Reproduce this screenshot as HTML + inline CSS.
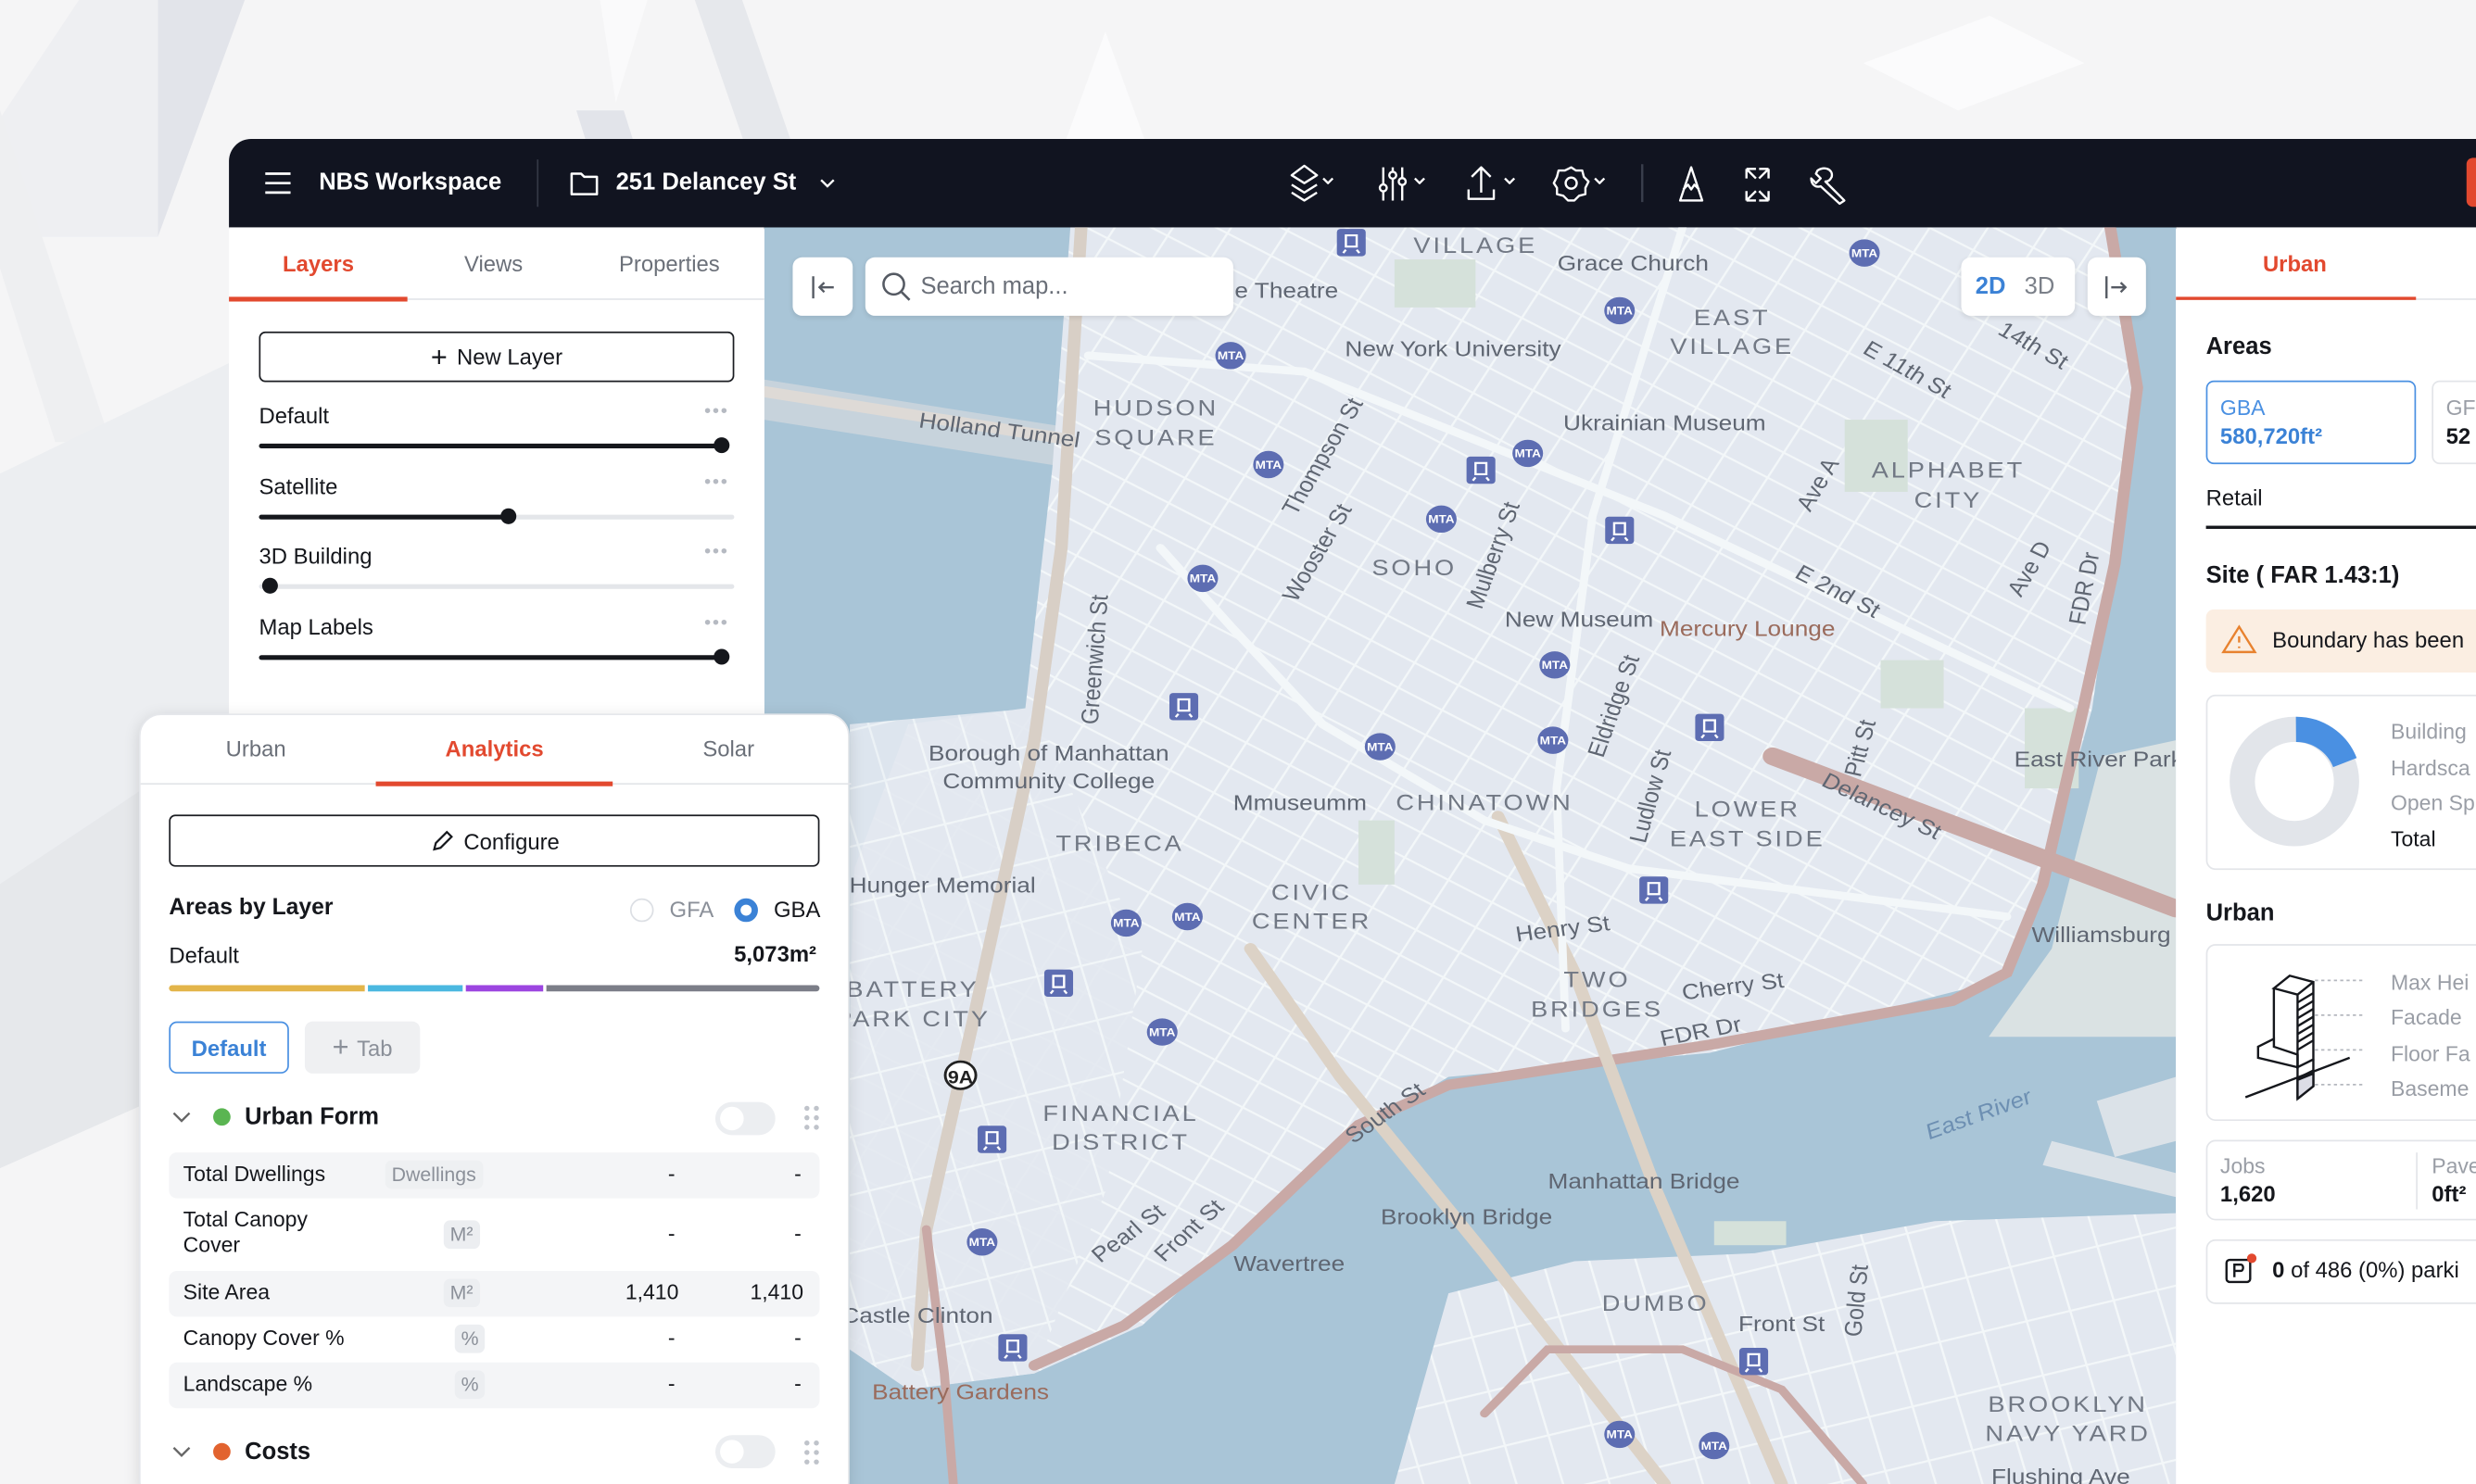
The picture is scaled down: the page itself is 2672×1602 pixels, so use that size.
<!DOCTYPE html>
<html><head><meta charset="utf-8">
<style>
*{box-sizing:border-box;margin:0;padding:0}
html,body{width:2672px;height:1602px;overflow:hidden;background:#f5f5f6}
body{font-family:"Liberation Sans",sans-serif;color:#15171c}
#root{position:absolute;left:0;top:0;width:1568px;height:940px;transform:scale(1.70408,1.7043);transform-origin:0 0;overflow:hidden;background:#f5f5f6}
.abs{position:absolute}
.t{position:absolute;white-space:nowrap}
.hdr{left:145px;top:88px;width:1440px;height:57px;background:#111420;border-radius:14px 0 0 0}
.wt{color:#fff;font-size:15px;font-weight:bold}
.lp{left:145px;top:144px;width:339px;height:800px;background:#fff}
.tab{font-size:14px;color:#6b7079}
.red{color:#e2492f}
.btn{position:absolute;border:1.5px solid #1b1d22;border-radius:4px;display:flex;align-items:center;justify-content:center;font-size:14px;gap:6px;background:#fff}
.lbl{font-size:14px;color:#15171c}
.dots{position:absolute;color:#b6bac2;font-size:12px;letter-spacing:1px}
.track{position:absolute;height:3px;background:#e4e6ea;border-radius:2px}
.fill{position:absolute;height:3px;background:#15171c;border-radius:2px}
.knob{position:absolute;width:10px;height:10px;border-radius:50%;background:#15171c}
.card{position:absolute;left:88px;top:452px;width:450px;height:500px;background:#fff;border-radius:14px;box-shadow:0 2px 10px rgba(0,0,0,.12);border:1px solid #e5e7eb}
.row{position:absolute;left:18px;width:412px;border-radius:5px;font-size:13.5px}
.sh{background:#f4f5f7}
.chip{position:absolute;background:#eceef1;color:#8b9099;font-size:12.5px;border-radius:4px;padding:2px 4px}
.rp{left:1378px;top:144px;width:200px;height:800px;background:#fff}
.rc{position:absolute;left:1397px;width:190px;border:1px solid #e3e5e9;border-radius:6px;background:#fff}
.gl{font-size:13.5px;color:#9a9ea6}
</style></head><body><div id="root">

<svg class="abs" style="left:0;top:0" width="1568" height="940">
<polygon points="50,0 100,0 100,150 0,150 0,75" fill="#eeeff2"/>
<polygon points="100,0 155,0 100,150" fill="#e2e4ea"/>
<polygon points="0,70 70,280 35,280 0,170" fill="#eeeff1"/>
<polygon points="365,70 425,260 455,260 395,70" fill="#e2e4ea"/>
<polygon points="380,0 410,0 390,65" fill="#fafafb"/>
<polygon points="440,0 470,0 560,260 530,260" fill="#e6e8ec"/>
<polygon points="700,20 740,130 660,130" fill="#fbfbfc"/>
<polygon points="0,300 145,230 145,640 0,720" fill="#eceef1"/>
<polygon points="0,560 90,500 90,700 0,740" fill="#e6e8eb"/>
<polygon points="1180,40 1260,10 1320,40 1240,70" fill="#fbfbfc"/>
</svg>

<div class="abs hdr"></div>
<svg class="abs" style="left:166px;top:108px" width="20" height="16"><path d="M2 2H18M2 8H18M2 14H18" stroke="#fff" stroke-width="1.6"/></svg>
<div class="t wt" style="left:202px;top:107px">NBS Workspace</div>
<div class="abs" style="left:340px;top:101px;width:1px;height:30px;background:#333845"></div>
<svg class="abs" style="left:360px;top:107px" width="20" height="18"><path d="M2 3H8L10 5H18V16H2Z" fill="none" stroke="#fff" stroke-width="1.5" stroke-linejoin="round"/></svg>
<div class="t wt" style="left:390px;top:107px">251 Delancey St</div>
<svg class="abs" style="left:518px;top:111px" width="12" height="10"><path d="M2 3L6 7L10 3" fill="none" stroke="#fff" stroke-width="1.4"/></svg>
<svg class="abs" style="left:812px;top:100px" width="370" height="32" fill="none" stroke="#fff" stroke-width="1.4" stroke-linejoin="round">
<path d="M14 5L22 11L14 16L6 11Z"/><path d="M6 17L14 22L22 17M6 22L14 27L22 22"/><path d="M26 13L29 16L32 13"/>
<path d="M64 6V27M70 6V27M76 6V27"/><circle cx="64" cy="19" r="2.2" fill="#111420"/><circle cx="70" cy="11" r="2.2" fill="#111420"/><circle cx="76" cy="15" r="2.2" fill="#111420"/><path d="M84 13L87 16L90 13"/>
<path d="M126 22V7M120 12L126 6L132 12M118 20V26H134V20"/><path d="M141 13L144 16L147 13"/>
<circle cx="183" cy="16" r="3.5"/><path d="M183 6L186 8L190 8L191 12L194 15L192 19L192 23L188 24L185 27L181 27L178 24L174 23L174 19L172 16L174 12L175 8L179 8Z"/><path d="M198 13L201 16L204 13"/>
<path d="M228 4V28" stroke="#3a3f4c"/>
<path d="M259 6L252 27H266Z"/><path d="M254 20L257 17L259 20L261 17L264 20"/>
<path d="M294 7H300M294 7V13M294 7L300 13M308 7H302M308 7V13M308 7L302 13M294 27H300M294 27V21M294 27L300 21M308 27H302M308 27V21M308 27L302 21"/>
<path d="M339 8C343 5 349 7 348 12C347 14 346 15 344 15L356 27L353 29L341 18C338 19 335 17 335 13L338 16L341 13L338 10Z"/>
</svg>
<div class="abs" style="left:1562px;top:100px;width:10px;height:31px;background:#e2492f;border-radius:4px"></div>

<svg class="abs" style="left:484px;top:144px" width="894" height="796" viewBox="0 0 1568 1568" preserveAspectRatio="none">
<defs>
<pattern id="st" width="56" height="36" patternUnits="userSpaceOnUse" patternTransform="rotate(30)">
<rect width="56" height="36" fill="#e3e8f0"/><path d="M0 0H56M0 0V36" stroke="#f3f7f9" stroke-width="5"/></pattern>
<pattern id="st2" width="50" height="70" patternUnits="userSpaceOnUse" patternTransform="rotate(-15)">
<rect width="50" height="70" fill="#e3e8f0"/><path d="M0 0H50M0 0V70" stroke="#f3f7f9" stroke-width="5"/></pattern>
</defs>
<rect width="1568" height="1568" fill="#a9c5d7"/>
<path d="M0 190L340 250L340 300L0 240Z" fill="#c7d3dc"/>
<path d="M340 0L1500 0L1525 200L1475 600L1420 820L1370 940L1050 1030L760 1060L640 1140L420 1370L300 1430L160 1450L95 1400L95 1000L100 800L160 620L290 600L320 300Z" fill="url(#st)"/>
<path d="M95 620L300 600L420 900L380 1200L300 1430L160 1450L95 1400Z" fill="url(#st2)" opacity=".9"/>
<path d="M1568 640L1485 660L1430 900L1360 1010L1568 1010Z" fill="#dae2e3"/>
<path d="M700 1568L760 1330L900 1290L1100 1280L1300 1240L1568 1230L1568 1568Z" fill="url(#st2)"/>
<path d="M1568 1060L1480 1090L1500 1160L1568 1140ZM1430 1140L1568 1180L1568 1210L1420 1170Z" fill="#dbe2e8"/>
<g fill="#d5e1da"><rect x="700" y="40" width="90" height="60"/><rect x="1200" y="240" width="70" height="90"/><rect x="1240" y="540" width="70" height="60"/><rect x="660" y="740" width="40" height="80"/><rect x="1400" y="600" width="60" height="100"/><rect x="1055" y="1240" width="80" height="30"/></g>
<g fill="none" stroke-linecap="round">
<path d="M352 0L330 400L300 640L230 1000L180 1250L170 1420" stroke="#d8cfc6" stroke-width="14"/>
<path d="M1495 0L1525 200L1500 420L1465 600L1420 820L1380 930L1320 965L1050 1020L760 1070L660 1120L520 1270L400 1370L300 1420" stroke="#c9a9a6" stroke-width="13"/>
<path d="M1120 660L1568 850" stroke="#c9a9a6" stroke-width="22"/>
<path d="M540 900L640 1060L800 1280L1000 1568" stroke="#dcd2c6" stroke-width="14"/>
<path d="M815 735L900 930L990 1200L1130 1568" stroke="#dcd2c6" stroke-width="14"/>
<path d="M800 1480L870 1400L1020 1400L1130 1450L1220 1568" stroke="#c9a9a6" stroke-width="10"/>
<path d="M0 205L340 265" stroke="#dedad6" stroke-width="14"/>
<path d="M440 400L520 500L620 620L800 740L960 800L1380 860" stroke="#f3f7f9" stroke-width="10"/>
<path d="M360 160L600 180L1000 360L1450 600" stroke="#f3f7f9" stroke-width="10"/>
<path d="M1020 0L920 360L880 700L890 1000" stroke="#f3f7f9" stroke-width="9"/>
<path d="M180 1250L200 1430L210 1568" stroke="#c9a9a6" stroke-width="10"/>
</g>
<g fill="#5d6db2">
<circle cx="1222" cy="32" r="17"/><circle cx="950" cy="104" r="17"/><circle cx="518" cy="160" r="17"/><circle cx="560" cy="296" r="17"/><circle cx="848" cy="282" r="17"/><circle cx="752" cy="364" r="17"/><circle cx="487" cy="438" r="17"/><circle cx="878" cy="546" r="17"/><circle cx="876" cy="640" r="17"/><circle cx="684" cy="648" r="17"/><circle cx="402" cy="868" r="17"/><circle cx="470" cy="860" r="17"/><circle cx="442" cy="1004" r="17"/><circle cx="242" cy="1266" r="17"/><circle cx="950" cy="1506" r="17"/><circle cx="1055" cy="1520" r="17"/>
</g>
<g fill="#fff" font-family="Liberation Sans" font-weight="bold" font-size="14" text-anchor="middle">
<text x="1222" y="37">MTA</text><text x="950" y="109">MTA</text><text x="518" y="165">MTA</text><text x="560" y="301">MTA</text><text x="848" y="287">MTA</text><text x="752" y="369">MTA</text><text x="487" y="443">MTA</text><text x="878" y="551">MTA</text><text x="876" y="645">MTA</text><text x="684" y="653">MTA</text><text x="402" y="873">MTA</text><text x="470" y="865">MTA</text><text x="442" y="1009">MTA</text><text x="242" y="1271">MTA</text><text x="950" y="1511">MTA</text><text x="1055" y="1525">MTA</text>
</g>
<g fill="#5d6db2">
<rect x="636" y="2" width="32" height="34" rx="4"/><rect x="780" y="286" width="32" height="34" rx="4"/><rect x="934" y="361" width="32" height="34" rx="4"/><rect x="450" y="581" width="32" height="34" rx="4"/><rect x="1034" y="607" width="32" height="34" rx="4"/><rect x="972" y="810" width="32" height="34" rx="4"/><rect x="311" y="926" width="32" height="34" rx="4"/><rect x="237" y="1121" width="32" height="34" rx="4"/><rect x="260" y="1381" width="32" height="34" rx="4"/><rect x="1083" y="1398" width="32" height="34" rx="4"/>
</g>
<g fill="none" stroke="#fff" stroke-width="2.5">
<path d="M646 10H658V24H646ZM646 28L643 32M658 28L661 32"/><path d="M790 294H802V308H790ZM790 312L787 316M802 312L805 316"/><path d="M944 369H956V383H944ZM944 387L941 391M956 387L959 391"/><path d="M460 589H472V603H460ZM460 607L457 611M472 607L475 611"/><path d="M1044 615H1056V629H1044ZM1044 633L1041 637M1056 633L1059 637"/><path d="M982 818H994V832H982ZM982 836L979 840M994 836L997 840"/><path d="M321 934H333V948H321ZM321 952L318 956M333 952L336 956"/><path d="M247 1129H259V1143H247ZM247 1147L244 1151M259 1147L262 1151"/><path d="M270 1389H282V1403H270ZM270 1407L267 1411M282 1407L285 1411"/><path d="M1093 1406H1105V1420H1093ZM1093 1424L1090 1428M1105 1424L1108 1428"/>
</g>
<circle cx="218" cy="1058" r="17" fill="#fff" stroke="#222" stroke-width="3"/><text x="218" y="1068" font-size="22" font-weight="bold" text-anchor="middle" font-family="Liberation Sans" fill="#222">9A</text>
<g fill="#5f6672" font-family="Liberation Sans" font-size="27" text-anchor="middle">
<g letter-spacing="3" fill="#717884" font-size="28">
<text x="790" y="32">VILLAGE</text><text x="1075" y="122">EAST</text><text x="1075" y="158">VILLAGE</text><text x="435" y="235">HUDSON</text><text x="435" y="272">SQUARE</text><text x="1315" y="312">ALPHABET</text><text x="1315" y="350">CITY</text><text x="722" y="434">SOHO</text><text x="800" y="727">CHINATOWN</text><text x="1092" y="735">LOWER</text><text x="1092" y="772">EAST SIDE</text><text x="395" y="778">TRIBECA</text><text x="608" y="839">CIVIC</text><text x="608" y="875">CENTER</text><text x="925" y="948">TWO</text><text x="925" y="985">BRIDGES</text><text x="165" y="960">BATTERY</text><text x="165" y="997">PARK CITY</text><text x="396" y="1115">FINANCIAL</text><text x="396" y="1151">DISTRICT</text><text x="990" y="1352">DUMBO</text><text x="1448" y="1478">BROOKLYN</text><text x="1448" y="1514">NAVY YARD</text>
</g>
<text x="965" y="54">Grace Church</text><text x="580" y="88">e Theatre</text><text x="765" y="161">New York University</text><text x="1000" y="253">Ukrainian Museum</text><text x="905" y="498">New Museum</text><text x="1092" y="510" fill="#9a6b5c">Mercury Lounge</text><text x="316" y="665">Borough of Manhattan</text><text x="316" y="700">Community College</text><text x="1482" y="673">East River Park</text><text x="595" y="727">Mmuseumm</text><text x="198" y="830">Hunger Memorial</text><text x="1485" y="892">Williamsburg</text><text x="977" y="1199">Manhattan Bridge</text><text x="780" y="1244">Brooklyn Bridge</text><text x="583" y="1302">Wavertree</text><text x="1130" y="1377">Front St</text><text x="170" y="1367">Castle Clinton</text><text x="218" y="1462" fill="#9a6b5c">Battery Gardens</text><text x="1440" y="1568">Flushing Ave</text>
<text transform="translate(260,262) rotate(8)">Holland Tunnel</text>
<text transform="translate(1265,185) rotate(32)">E 11th St</text>
<text transform="translate(1405,155) rotate(32)">14th St</text>
<text transform="translate(628,290) rotate(-62)">Thompson St</text>
<text transform="translate(622,410) rotate(-62)">Wooster St</text>
<text transform="translate(818,412) rotate(-72)">Mulberry St</text>
<text transform="translate(1178,325) rotate(-62)">Ave A</text>
<text transform="translate(1413,430) rotate(-62)">Ave D</text>
<text transform="translate(1475,452) rotate(-80)">FDR Dr</text>
<text transform="translate(1188,462) rotate(30)">E 2nd St</text>
<text transform="translate(376,540) rotate(-86)">Greenwich St</text>
<text transform="translate(952,600) rotate(-72)">Eldridge St</text>
<text transform="translate(993,712) rotate(-76)">Ludlow St</text>
<text transform="translate(1226,652) rotate(-76)">Pitt St</text>
<text transform="translate(1237,730) rotate(28)">Delancey St</text>
<text transform="translate(888,884) rotate(-8)">Henry St</text>
<text transform="translate(1077,956) rotate(-8)">Cherry St</text>
<text transform="translate(1042,1012) rotate(-12)">FDR Dr</text>
<text transform="translate(695,1112) rotate(-38)">South St</text>
<text transform="translate(1352,1115) rotate(-22)" fill="#6d8fb2" font-style="italic">East River</text>
<text transform="translate(410,1262) rotate(-40)">Pearl St</text>
<text transform="translate(478,1258) rotate(-45)">Front St</text>
<text transform="translate(1222,1340) rotate(-85)">Gold St</text>
</g>
</svg>

<div class="abs" style="left:502px;top:163px;width:38px;height:37px;background:#fff;border-radius:6px;box-shadow:0 1px 3px rgba(0,0,0,.1)"></div>
<svg class="abs" style="left:510px;top:172px" width="22" height="20" fill="none" stroke="#555a63" stroke-width="1.4"><path d="M5 3V17M18 10H9M12 7L9 10L12 13"/></svg>
<div class="abs" style="left:548px;top:163px;width:233px;height:37px;background:#fff;border-radius:6px;box-shadow:0 1px 3px rgba(0,0,0,.1)"></div>
<svg class="abs" style="left:557px;top:171px" width="22" height="22" fill="none" stroke="#555a63" stroke-width="1.5"><circle cx="9" cy="9" r="6.5"/><path d="M14 14L19 19"/></svg>
<div class="t" style="left:583px;top:173px;font-size:15px;color:#6a6f78">Search map...</div>
<div class="abs" style="left:1242px;top:163px;width:72px;height:37px;background:#fff;border-radius:6px;box-shadow:0 1px 3px rgba(0,0,0,.1)"></div>
<div class="t" style="left:1251px;top:173px;font-size:15px;color:#3b82d6;font-weight:bold">2D</div>
<div class="t" style="left:1282px;top:173px;font-size:15px;color:#7b8089">3D</div>
<div class="abs" style="left:1322px;top:163px;width:37px;height:37px;background:#fff;border-radius:6px;box-shadow:0 1px 3px rgba(0,0,0,.1)"></div>
<svg class="abs" style="left:1330px;top:172px" width="22" height="20" fill="none" stroke="#555a63" stroke-width="1.4"><path d="M4 3V17M7 10H16M13 7L16 10L13 13"/></svg>

<div class="abs lp"></div>
<div class="t tab red" style="left:179px;top:159px;font-weight:bold">Layers</div>
<div class="t tab" style="left:294px;top:159px">Views</div>
<div class="t tab" style="left:392px;top:159px">Properties</div>
<div class="abs" style="left:145px;top:189px;width:339px;height:1px;background:#e3e5e9"></div>
<div class="abs" style="left:145px;top:188px;width:113px;height:3px;background:#e2492f"></div>
<div class="btn" style="left:164px;top:210px;width:301px;height:32px"><span style="font-size:18px;font-weight:300">+</span>New Layer</div>

<div class="t lbl" style="left:164px;top:255px">Default</div><div class="dots" style="left:446px;top:253px">•••</div>
<div class="fill" style="left:164px;top:281px;width:293px"></div><div class="knob" style="left:452px;top:277px"></div>
<div class="t lbl" style="left:164px;top:300px">Satellite</div><div class="dots" style="left:446px;top:298px">•••</div>
<div class="track" style="left:164px;top:326px;width:301px"></div><div class="fill" style="left:164px;top:326px;width:158px"></div><div class="knob" style="left:317px;top:322px"></div>
<div class="t lbl" style="left:164px;top:344px">3D Building</div><div class="dots" style="left:446px;top:342px">•••</div>
<div class="track" style="left:164px;top:370px;width:301px"></div><div class="knob" style="left:166px;top:366px"></div>
<div class="t lbl" style="left:164px;top:389px">Map Labels</div><div class="dots" style="left:446px;top:387px">•••</div>
<div class="fill" style="left:164px;top:415px;width:293px"></div><div class="knob" style="left:452px;top:411px"></div>

<div class="card">
<div class="t tab" style="left:54px;top:13px">Urban</div>
<div class="t tab red" style="left:193px;top:13px;font-weight:bold">Analytics</div>
<div class="t tab" style="left:356px;top:13px">Solar</div>
<div class="abs" style="left:0;top:43px;width:450px;height:1px;background:#e3e5e9"></div>
<div class="abs" style="left:149px;top:42px;width:150px;height:3px;background:#e2492f"></div>
<div class="btn" style="left:18px;top:63px;width:412px;height:33px"><svg width="16" height="16" fill="none" stroke="#15171c" stroke-width="1.3"><path d="M3 13L4 9L11 2L14 5L7 12Z"/></svg>Configure</div>
<div class="t" style="left:18px;top:114px;font-size:14.5px;font-weight:bold">Areas by Layer</div>
<div class="abs" style="left:310px;top:116px;width:15px;height:15px;border-radius:50%;border:1.5px solid #dcdfe4"></div>
<div class="t" style="left:335px;top:115px;font-size:14px;color:#8b9099">GFA</div>
<div class="abs" style="left:376px;top:116px;width:15px;height:15px;border-radius:50%;border:4.5px solid #3b82d6"></div>
<div class="t" style="left:401px;top:115px;font-size:14px;color:#15171c">GBA</div>
<div class="t" style="left:18px;top:144px;font-size:14px">Default</div>
<div class="t" style="right:20px;top:143px;font-size:14px;font-weight:bold">5,073m²</div>
<div class="abs" style="left:18px;top:171px;width:124px;height:4px;background:#e3b54a;border-radius:2px 0 0 2px"></div>
<div class="abs" style="left:144px;top:171px;width:60px;height:4px;background:#4bb8e0"></div>
<div class="abs" style="left:206px;top:171px;width:49px;height:4px;background:#9c45e0"></div>
<div class="abs" style="left:257px;top:171px;width:173px;height:4px;background:#7c7e88;border-radius:0 2px 2px 0"></div>
<div class="abs" style="left:18px;top:194px;width:76px;height:33px;border:1.5px solid #4a90e2;border-radius:5px;color:#3b82d6;font-weight:bold;font-size:14px;display:flex;align-items:center;justify-content:center">Default</div>
<div class="abs" style="left:104px;top:194px;width:73px;height:33px;background:#eff0f2;border-radius:5px;color:#8b9099;font-size:14px;display:flex;align-items:center;justify-content:center;gap:5px"><span style="font-size:18px">+</span>Tab</div>
<svg class="abs" style="left:19px;top:249px" width="14" height="12" fill="none" stroke="#666" stroke-width="1.4"><path d="M2 3L7 8L12 3"/></svg>
<div class="abs" style="left:46px;top:249px;width:11px;height:11px;border-radius:50%;background:#5ab552"></div>
<div class="t" style="left:66px;top:246px;font-size:15px;font-weight:bold">Urban Form</div>
<div class="abs" style="left:364px;top:245px;width:38px;height:21px;border-radius:11px;background:#eceef1"><div class="abs" style="left:3px;top:3px;width:15px;height:15px;border-radius:50%;background:#fff"></div></div>
<svg class="abs" style="left:419px;top:246px" width="12" height="18" fill="#bfc3ca"><circle cx="3" cy="3" r="1.6"/><circle cx="9" cy="3" r="1.6"/><circle cx="3" cy="9" r="1.6"/><circle cx="9" cy="9" r="1.6"/><circle cx="3" cy="15" r="1.6"/><circle cx="9" cy="15" r="1.6"/></svg>
<div class="row sh" style="top:277px;height:29px"><span class="t" style="left:9px;top:6px">Total Dwellings</span><span class="chip" style="left:137px;top:5px;background:#eef0f2">Dwellings</span><span class="t" style="left:316px;top:6px">-</span><span class="t" style="left:396px;top:6px">-</span></div>
<div class="row" style="top:308px;height:44px"><span class="t" style="left:9px;top:4px;line-height:16px">Total Canopy<br>Cover</span><span class="chip" style="left:174px;top:12px">M²</span><span class="t" style="left:316px;top:13px">-</span><span class="t" style="left:396px;top:13px">-</span></div>
<div class="row sh" style="top:352px;height:29px"><span class="t" style="left:9px;top:6px">Site Area</span><span class="chip" style="left:174px;top:5px">M²</span><span class="t" style="left:289px;top:6px">1,410</span><span class="t" style="left:368px;top:6px">1,410</span></div>
<div class="row" style="top:381px;height:29px"><span class="t" style="left:9px;top:6px">Canopy Cover %</span><span class="chip" style="left:181px;top:5px">%</span><span class="t" style="left:316px;top:6px">-</span><span class="t" style="left:396px;top:6px">-</span></div>
<div class="row sh" style="top:410px;height:29px"><span class="t" style="left:9px;top:6px">Landscape %</span><span class="chip" style="left:181px;top:5px">%</span><span class="t" style="left:316px;top:6px">-</span><span class="t" style="left:396px;top:6px">-</span></div>
<svg class="abs" style="left:19px;top:461px" width="14" height="12" fill="none" stroke="#666" stroke-width="1.4"><path d="M2 3L7 8L12 3"/></svg>
<div class="abs" style="left:46px;top:461px;width:11px;height:11px;border-radius:50%;background:#e2632f"></div>
<div class="t" style="left:66px;top:458px;font-size:15px;font-weight:bold">Costs</div>
<div class="abs" style="left:364px;top:456px;width:38px;height:21px;border-radius:11px;background:#eceef1"><div class="abs" style="left:3px;top:3px;width:15px;height:15px;border-radius:50%;background:#fff"></div></div>
<svg class="abs" style="left:419px;top:458px" width="12" height="18" fill="#bfc3ca"><circle cx="3" cy="3" r="1.6"/><circle cx="9" cy="3" r="1.6"/><circle cx="3" cy="9" r="1.6"/><circle cx="9" cy="9" r="1.6"/><circle cx="3" cy="15" r="1.6"/><circle cx="9" cy="15" r="1.6"/></svg>
</div>

<div class="abs rp"></div>
<div class="t tab red" style="left:1433px;top:159px;font-weight:bold">Urban</div>
<div class="abs" style="left:1378px;top:189px;width:200px;height:1px;background:#e3e5e9"></div>
<div class="abs" style="left:1378px;top:188px;width:152px;height:2px;background:#e2492f"></div>
<div class="t" style="left:1397px;top:211px;font-size:15px;font-weight:bold">Areas</div>
<div class="abs" style="left:1397px;top:241px;width:133px;height:53px;border:1.5px solid #4a90e2;border-radius:5px"></div>
<div class="t" style="left:1406px;top:251px;font-size:13.5px;color:#4a90e2">GBA</div>
<div class="t" style="left:1406px;top:268px;font-size:14px;color:#3b82d6;font-weight:bold">580,720ft²</div>
<div class="abs" style="left:1540px;top:241px;width:40px;height:53px;border:1px solid #e3e5e9;border-radius:5px"></div>
<div class="t gl" style="left:1549px;top:251px">GF</div>
<div class="t" style="left:1549px;top:268px;font-size:14px;font-weight:bold">52</div>
<div class="t" style="left:1397px;top:307px;font-size:14px">Retail</div>
<div class="abs" style="left:1397px;top:333px;width:180px;height:2px;background:#15171c"></div>
<div class="t" style="left:1397px;top:356px;font-size:15px;font-weight:bold">Site ( FAR 1.43:1)</div>
<div class="abs" style="left:1397px;top:386px;width:180px;height:40px;background:#fbeee2;border-radius:5px"></div>
<svg class="abs" style="left:1406px;top:395px" width="24" height="20" fill="none" stroke="#e8822f" stroke-width="1.4"><path d="M12 2L22 18H2Z"/><path d="M12 8V12M12 14.5V15.5"/></svg>
<div class="t" style="left:1439px;top:397px;font-size:14px">Boundary has been</div>
<div class="rc" style="top:440px;height:111px"></div>
<svg class="abs" style="left:1405px;top:447px" width="100" height="96"><circle cx="48" cy="48" r="33" fill="none" stroke="#e2e5ea" stroke-width="16"/><path d="M49 15A33 33 0 0 1 80 36" fill="none" stroke="#4a90e2" stroke-width="16"/></svg>
<div class="t gl" style="left:1514px;top:453px;line-height:22.5px">Building<br>Hardsca<br>Open Sp<br><span style="color:#15171c">Total</span></div>
<div class="t" style="left:1397px;top:570px;font-size:15px;font-weight:bold">Urban</div>
<div class="rc" style="top:598px;height:112px"></div>
<svg class="abs" style="left:1418px;top:608px" width="100" height="95" fill="none" stroke="#15171c" stroke-width="1.4">
<path d="M22 18L32 10L47 14V63L37 68V22Z" fill="#fff"/><path d="M22 18V55M37 22L47 14"/><path d="M37 27L47 21M37 32L47 26M37 37L47 31M37 42L47 36M37 47L47 41M37 52L47 46M37 57L47 51"/>
<path d="M12 55L22 50V55L37 60V68L12 62Z" fill="#fff"/><path d="M37 60V88M47 63V80L37 88" /><path d="M37 75L47 70M37 81L47 76"/><path d="M37 76L47 72V80L37 88Z" fill="#dcdde6"/>
<path d="M4 87L70 62"/><path d="M48 13H80M48 35H80M48 57H80M48 79H80" stroke="#b5b8bf" stroke-dasharray="2 2" stroke-width="1"/></svg>
<div class="t gl" style="left:1514px;top:612px;line-height:22.3px">Max Hei<br>Facade<br>Floor Fa<br>Baseme</div>
<div class="rc" style="top:722px;height:51px"></div>
<div class="t gl" style="left:1406px;top:731px">Jobs</div>
<div class="t" style="left:1406px;top:748px;font-size:14px;font-weight:bold">1,620</div>
<div class="abs" style="left:1530px;top:730px;width:1px;height:36px;background:#e3e5e9"></div>
<div class="t gl" style="left:1540px;top:731px">Pave</div>
<div class="t" style="left:1540px;top:748px;font-size:14px;font-weight:bold">0ft²</div>
<div class="rc" style="top:785px;height:41px"></div>
<svg class="abs" style="left:1408px;top:793px" width="24" height="22" fill="none" stroke="#15171c" stroke-width="1.4"><rect x="2" y="5" width="15" height="14" rx="2"/><path d="M7 16V8H11C13 8 13 12 11 12H7"/><circle cx="18" cy="4" r="3" fill="#e2492f" stroke="none"/></svg>
<div class="t" style="left:1439px;top:796px;font-size:14px"><b>0</b> of 486 (0%) parki</div>

</div></body></html>
